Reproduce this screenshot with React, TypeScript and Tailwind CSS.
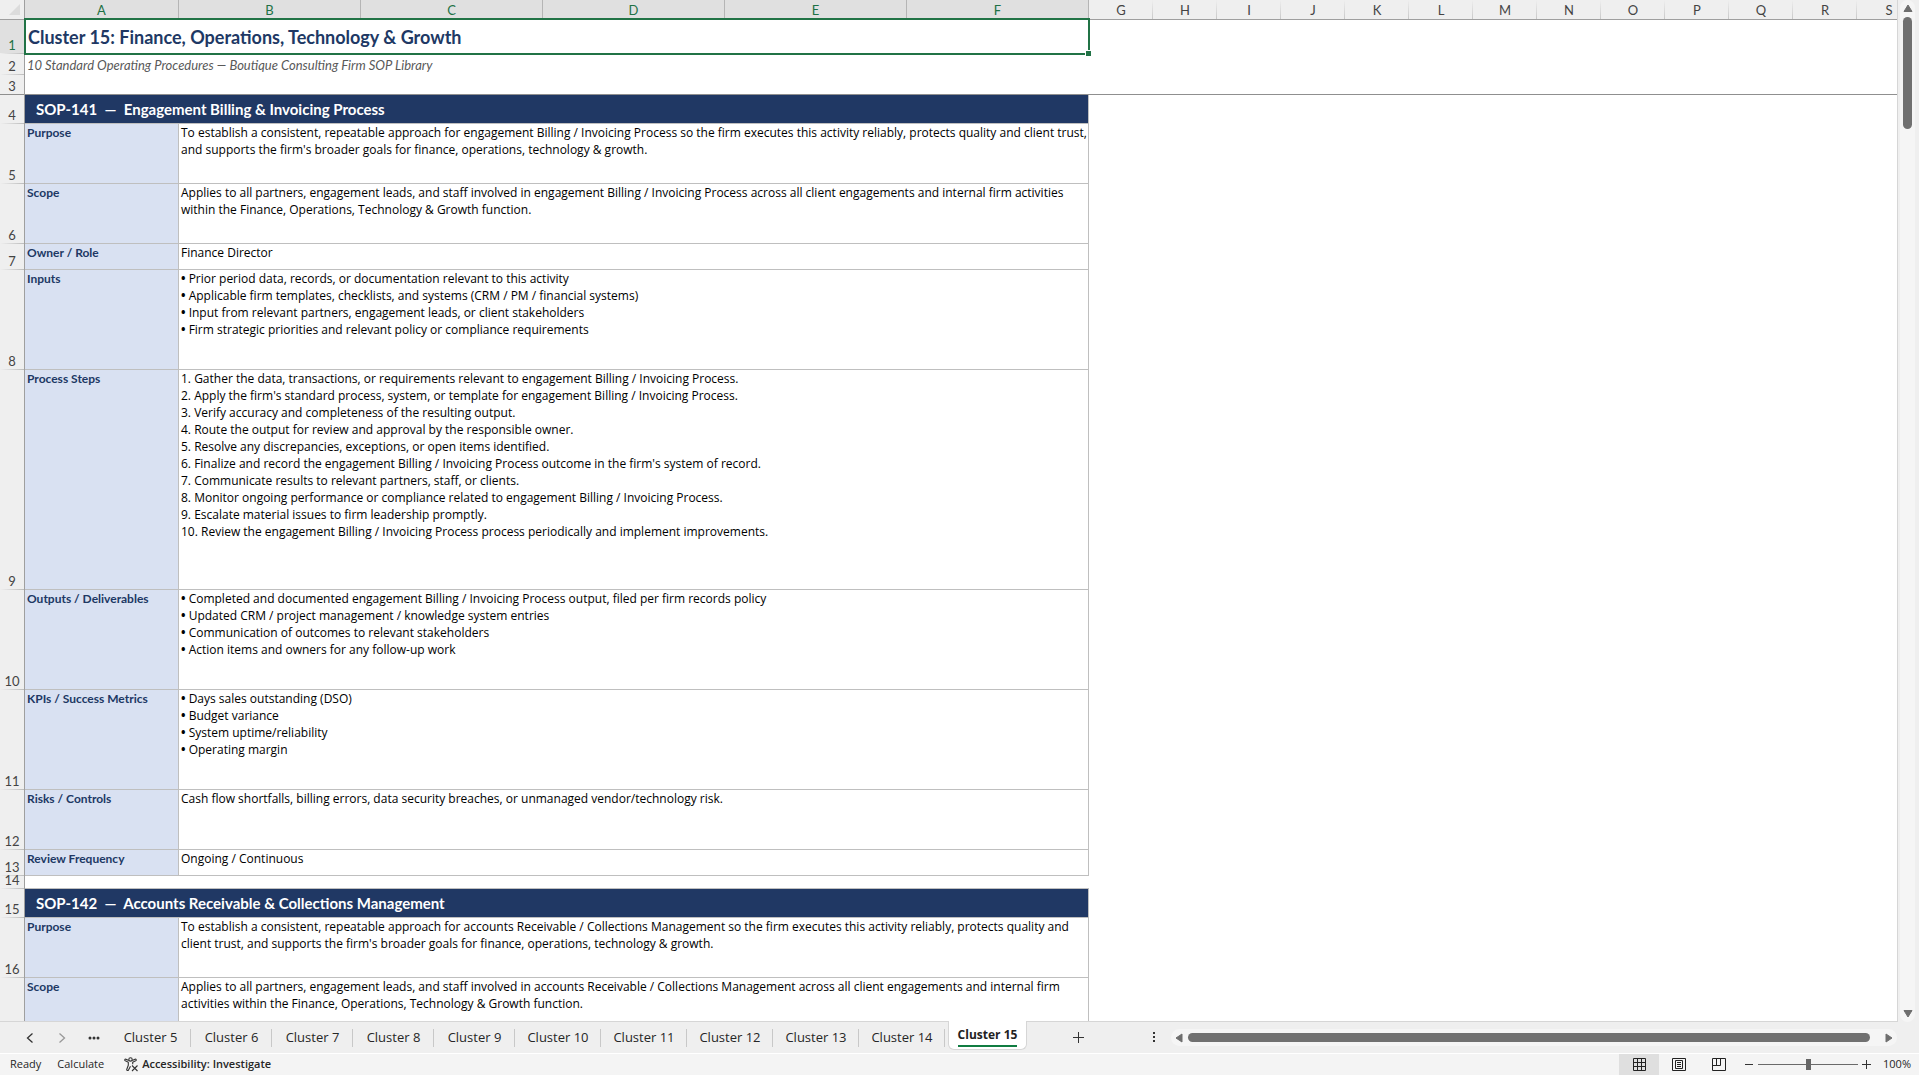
import clsx from "clsx";

const MERGED_COLS = ["A", "B", "C", "D", "E", "F"];
const FREE_COLS = ["G", "H", "I", "J", "K", "L", "M", "N", "O", "P", "Q", "R", "S"];

const TABS = [5, 6, 7, 8, 9, 10, 11, 12, 13, 14, 15];
const ACTIVE_TAB = 15;

type Field = { row: number; height: string; label: string; bullets?: boolean; lines: string[] };

const SOP_141: Field[] = [
  {
    row: 5,
    height: "h-[60px]",
    label: "Purpose",
    lines: [
      "To establish a consistent, repeatable approach for engagement Billing / Invoicing Process so the firm executes this activity reliably, protects quality and client trust,",
      "and supports the firm's broader goals for finance, operations, technology & growth.",
    ],
  },
  {
    row: 6,
    height: "h-[60px]",
    label: "Scope",
    lines: [
      "Applies to all partners, engagement leads, and staff involved in engagement Billing / Invoicing Process across all client engagements and internal firm activities",
      "within the Finance, Operations, Technology & Growth function.",
    ],
  },
  { row: 7, height: "h-[26px]", label: "Owner / Role", lines: ["Finance Director"] },
  {
    row: 8,
    height: "h-[100px]",
    label: "Inputs",
    bullets: true,
    lines: [
      "Prior period data, records, or documentation relevant to this activity",
      "Applicable firm templates, checklists, and systems (CRM / PM / financial systems)",
      "Input from relevant partners, engagement leads, or client stakeholders",
      "Firm strategic priorities and relevant policy or compliance requirements",
    ],
  },
  {
    row: 9,
    height: "h-[220px]",
    label: "Process Steps",
    lines: [
      "1. Gather the data, transactions, or requirements relevant to engagement Billing / Invoicing Process.",
      "2. Apply the firm's standard process, system, or template for engagement Billing / Invoicing Process.",
      "3. Verify accuracy and completeness of the resulting output.",
      "4. Route the output for review and approval by the responsible owner.",
      "5. Resolve any discrepancies, exceptions, or open items identified.",
      "6. Finalize and record the engagement Billing / Invoicing Process outcome in the firm's system of record.",
      "7. Communicate results to relevant partners, staff, or clients.",
      "8. Monitor ongoing performance or compliance related to engagement Billing / Invoicing Process.",
      "9. Escalate material issues to firm leadership promptly.",
      "10. Review the engagement Billing / Invoicing Process process periodically and implement improvements.",
    ],
  },
  {
    row: 10,
    height: "h-[100px]",
    label: "Outputs / Deliverables",
    bullets: true,
    lines: [
      "Completed and documented engagement Billing / Invoicing Process output, filed per firm records policy",
      "Updated CRM / project management / knowledge system entries",
      "Communication of outcomes to relevant stakeholders",
      "Action items and owners for any follow-up work",
    ],
  },
  {
    row: 11,
    height: "h-[100px]",
    label: "KPIs / Success Metrics",
    bullets: true,
    lines: [
      "Days sales outstanding (DSO)",
      "Budget variance",
      "System uptime/reliability",
      "Operating margin",
    ],
  },
  {
    row: 12,
    height: "h-[60px]",
    label: "Risks / Controls",
    lines: ["Cash flow shortfalls, billing errors, data security breaches, or unmanaged vendor/technology risk."],
  },
  { row: 13, height: "h-[26px]", label: "Review Frequency", lines: ["Ongoing / Continuous"] },
];

const SOP_142: Field[] = [
  {
    row: 16,
    height: "h-[60px]",
    label: "Purpose",
    lines: [
      "To establish a consistent, repeatable approach for accounts Receivable / Collections Management so the firm executes this activity reliably, protects quality and",
      "client trust, and supports the firm's broader goals for finance, operations, technology & growth.",
    ],
  },
  {
    row: 17,
    height: "h-[60px]",
    label: "Scope",
    lines: [
      "Applies to all partners, engagement leads, and staff involved in accounts Receivable / Collections Management across all client engagements and internal firm",
      "activities within the Finance, Operations, Technology & Growth function.",
    ],
  },
];

function RowNumber({ n, selected, frozenEdge }: { n: number; selected?: boolean; frozenEdge?: boolean }) {
  return (
    <th
      scope="row"
      className={clsx(
        "border-r border-[#9f9f9f] p-0 pb-1 align-bottom text-center text-[13px] leading-[9px] font-normal bg-no-repeat bg-bottom bg-[length:100%_1px]",
        selected ? "bg-[#e0e0e0] text-[#1e7145]" : "bg-[#efefef] text-[#444444]",
        frozenEdge
          ? "bg-[linear-gradient(#8f8f8f,#8f8f8f)]"
          : "bg-[linear-gradient(to_right,#efefef,#bdbdbd)]",
      )}
    >
      {n}
    </th>
  );
}

function BannerRow({ n, code, title }: { n: number; code: string; title: string }) {
  return (
    <tr className="h-[29px]">
      <RowNumber n={n} />
      <td
        colSpan={6}
        className="border-r border-b border-[#bfbfbf] bg-[#203864] p-0 pl-[11px] align-middle text-[15px] leading-5 font-bold whitespace-pre text-white"
      >
        {`${code}  —  ${title}`}
      </td>
      <td colSpan={13} />
    </tr>
  );
}

function FieldRow({ field }: { field: Field }) {
  return (
    <tr className={field.height}>
      <RowNumber n={field.row} />
      <td className="border-r border-b border-[#bfbfbf] bg-[#d9e1f2] p-0 pl-0.5 align-top text-[12px] leading-[17px] font-bold text-[#203864]">
        {field.label}
      </td>
      <td
        colSpan={5}
        className="border-r border-b border-[#bfbfbf] p-0 pl-0.5 align-top font-['Open_Sans',sans-serif] text-[12px] leading-[17px] whitespace-nowrap text-black"
      >
        {field.lines.map((line) => (
          <div key={line}>
            {field.bullets && <b>• </b>}
            {line}
          </div>
        ))}
      </td>
      <td colSpan={13} />
    </tr>
  );
}

function Sheet() {
  return (
    <div className="min-w-0 flex-1 overflow-hidden border-r border-b border-[#d6d6d6] bg-white">
      <table className="w-[1921px] table-fixed border-separate border-spacing-0 font-[Lato,sans-serif]">
        <colgroup>
          <col className="w-[25px]" />
          <col className="w-[154px]" />
          {MERGED_COLS.slice(1).map((c) => (
            <col key={c} className="w-[182px]" />
          ))}
          {FREE_COLS.map((c) => (
            <col key={c} className="w-[64px]" />
          ))}
        </colgroup>
        <thead>
          <tr className="h-5">
            <td className="border-r border-b border-[#9f9f9f] bg-[#efefef] p-0">
              <svg width="24" height="19" className="block">
                <path d="M20 4v11H9z" fill="#dcdcdc" />
              </svg>
            </td>
            {MERGED_COLS.map((c) => (
              <th
                key={c}
                scope="col"
                className="border-r border-b border-r-[#b5b5b5] border-b-[#9f9f9f] bg-[#e0e0e0] p-0 pt-px text-center text-[13px] leading-4 font-normal text-[#1e7145]"
              >
                {c}
              </th>
            ))}
            {FREE_COLS.map((c) => (
              <th
                key={c}
                scope="col"
                className="border-b border-[#9f9f9f] bg-[#efefef] bg-[linear-gradient(#efefef,#c8c8c8)] bg-[length:1px_100%] bg-right bg-no-repeat p-0 pt-px text-center text-[13px] leading-4 font-normal text-[#444444]"
              >
                {c}
              </th>
            ))}
          </tr>
        </thead>
        <tbody>
          <tr className="h-[34px]">
            <RowNumber n={1} selected />
            <td
              colSpan={6}
              className="relative p-0 pl-[3px] align-middle text-[18px] leading-6 font-bold text-[#203864]"
            >
              Cluster 15: Finance, Operations, Technology &amp; Growth
              {/* Selection frame and fill handle */}
              <div className="pointer-events-none absolute -top-0.5 -right-px -bottom-px -left-px border-2 border-[#217346]" />
              <div className="absolute -right-0.5 -bottom-0.5 size-1.5 border-t border-l border-white bg-[#217346]" />
            </td>
            <td colSpan={13} />
          </tr>
          <tr className="h-[21px]">
            <RowNumber n={2} />
            <td colSpan={6} className="p-0 pl-0.5 align-middle text-[13px] leading-4 text-[#595959] italic">
              10 Standard Operating Procedures — Boutique Consulting Firm SOP Library
            </td>
            <td colSpan={13} />
          </tr>
          <tr className="h-5">
            <RowNumber n={3} frozenEdge />
            <td colSpan={19} className="border-b border-[#8f8f8f]" />
          </tr>
          <BannerRow n={4} code="SOP-141" title="Engagement Billing & Invoicing Process" />
          {SOP_141.map((f) => (
            <FieldRow key={f.row} field={f} />
          ))}
          <tr className="h-[13px]">
            <RowNumber n={14} />
            <td colSpan={6} className="border-b border-[#bfbfbf] p-0" />
            <td colSpan={13} className="p-0" />
          </tr>
          <BannerRow n={15} code="SOP-142" title="Accounts Receivable & Collections Management" />
          {SOP_142.map((f) => (
            <FieldRow key={f.row} field={f} />
          ))}
        </tbody>
      </table>
    </div>
  );
}

function VerticalScrollbar() {
  return (
    <div className="w-[21px] shrink-0 pr-1 pl-0.5">
      <div className="flex h-full flex-col items-center rounded-lg bg-[#f5f5f5] pt-1 pb-1">
        <button aria-label="Scroll up" className="block">
          <svg width="10" height="8" viewBox="0 0 10 8" className="block">
            <path d="M5 1 9 7.5H1z" fill="#6e6e6e" stroke="#6e6e6e" strokeLinejoin="round" />
          </svg>
        </button>
        <div className="mt-[5px] h-[112px] w-[9px] rounded-full bg-[#707070]" />
        <button aria-label="Scroll down" className="mt-auto block">
          <svg width="10" height="8" viewBox="0 0 10 8" className="block">
            <path d="M5 7 9 .5H1z" fill="#6e6e6e" stroke="#6e6e6e" strokeLinejoin="round" />
          </svg>
        </button>
      </div>
    </div>
  );
}

function SheetTab({ n }: { n: number }) {
  if (n === ACTIVE_TAB) {
    return (
      <div className="flex w-[86px] items-start border-r border-transparent px-[3px]">
        <button className="-mt-px flex h-[29px] flex-1 justify-center rounded-b-md border border-t-0 border-[#d6d6d6] bg-white pt-1 text-[12px] leading-5 font-bold text-[#222222]">
          <span className="h-[22px] border-b-2 border-[#107c41]">Cluster {n}</span>
        </button>
      </div>
    );
  }
  return (
    <button className={clsx("py-1.5 text-[13px] text-[#262626]", n < 10 ? "w-[81px]" : "w-[86px]")}>
      <span className="flex h-[18px] items-center justify-center border-r border-[#c8c8c8] pl-px">Cluster {n}</span>
    </button>
  );
}

function TabBar() {
  return (
    <div className="flex h-[31px] shrink-0 pl-3.5 whitespace-nowrap">
      <button aria-label="Previous sheet" className="flex w-8 items-center justify-center">
        <svg width="8" height="12" viewBox="0 0 8 12" fill="none" stroke="#333" strokeWidth="1.3">
          <path d="M6.5 1.5 1.5 6l5 4.5" />
        </svg>
      </button>
      <button aria-label="Next sheet" className="flex w-8 items-center justify-center">
        <svg width="8" height="12" viewBox="0 0 8 12" fill="none" stroke="#999" strokeWidth="1.3">
          <path d="M1.5 1.5l5 4.5-5 4.5" />
        </svg>
      </button>
      <button aria-label="All sheets" className="flex w-8 items-center justify-center">
        <svg width="12" height="4" viewBox="0 0 12 4" fill="#333">
          <circle cx="2" cy="2" r="1.5" />
          <circle cx="6" cy="2" r="1.5" />
          <circle cx="10" cy="2" r="1.5" />
        </svg>
      </button>
      {TABS.map((n) => (
        <SheetTab key={n} n={n} />
      ))}
      <button aria-label="New sheet" className="ml-[31px] flex w-8 items-center justify-center">
        <svg width="11" height="11" viewBox="0 0 11 11" stroke="#333" strokeWidth="1">
          <path d="M5.5 0v11M0 5.5h11" />
        </svg>
      </button>
      <div className="ml-[59px] flex w-[3px] items-center">
        <svg width="3" height="11" fill="#333">
          <path d="M0 0h2v2H0zM0 4h2v2H0zM0 8h2v2H0z" />
        </svg>
      </div>
      <div className="my-auto mr-[22px] ml-[15px] flex h-[17px] flex-1 items-center rounded-full bg-[#f5f5f5] px-1">
        <button aria-label="Scroll left">
          <svg width="8" height="10" viewBox="0 0 8 10" className="block">
            <path d="M1 5 7 1v8z" fill="#6e6e6e" stroke="#6e6e6e" strokeLinejoin="round" />
          </svg>
        </button>
        <div className="mr-[15px] ml-[5px] h-[9px] flex-1 rounded-full bg-[#707070]" />
        <button aria-label="Scroll right">
          <svg width="8" height="10" viewBox="0 0 8 10" className="block">
            <path d="M7 5 1 1v8z" fill="#6e6e6e" stroke="#6e6e6e" strokeLinejoin="round" />
          </svg>
        </button>
      </div>
    </div>
  );
}

function StatusBar() {
  return (
    <div className="flex h-[22px] shrink-0 items-stretch border-t border-white bg-[#f4f4f4] pl-2.5 text-[11px] text-[#262626]">
      <div className="flex items-center gap-4">
        <span>Ready</span>
        <span>Calculate</span>
      </div>
      <button className="ml-5 flex items-center gap-[3px] font-semibold">
        <svg width="15" height="15" viewBox="0 0 15 15" fill="none" stroke="#333" strokeWidth="1.1" strokeLinejoin="round">
          <circle cx="6.5" cy="2.4" r="1.7" />
          <path d="M4.8 3.4 2 2.2C.9 1.8.2 3.2 1.3 3.8L4.3 5.2v3L2.8 12.2c-.4 1.2 1.2 1.8 1.7.7L6.5 9.2M8.2 3.4 11 2.2c1.1-.4 1.8 1 .7 1.6L8.7 5.2v2" />
          <path d="M8 8.5l5.5 5.5M13.5 8.5 8 14" />
        </svg>
        Accessibility: Investigate
      </button>
      <div className="ml-auto flex items-stretch">
        <button aria-label="Normal view" className="flex w-10 items-center justify-center bg-[#dfdfdf]">
          <svg width="13" height="13" viewBox="0 0 13 13" fill="none" stroke="#222">
            <path d="M.5.5h12v12H.5zM4.5.5v12M8.5.5v12M.5 4.5h12M.5 8.5h12" />
          </svg>
        </button>
        <button aria-label="Page layout view" className="flex w-10 items-center justify-center">
          <svg width="14" height="13" viewBox="0 0 14 13" fill="none" stroke="#222">
            <path d="M.5.5h13v12H.5zM3.5 2.5h7v8h-7zM5 4.5h4M5 6.5h4M5 8.5h4" />
          </svg>
        </button>
        <button aria-label="Page break preview" className="flex w-10 items-center justify-center">
          <svg width="14" height="13" viewBox="0 0 14 13" fill="none" stroke="#222">
            <path d="M.5.5h13v12H.5zM.5 7.5h8v-7M4.5.5v7" />
          </svg>
        </button>
        <button aria-label="Zoom out" className="flex w-[19px] items-center justify-center">
          <svg width="8" height="9" stroke="#333">
            <path d="M0 4.5h8" />
          </svg>
        </button>
        <input
          type="range"
          aria-label="Zoom"
          min={0}
          max={100}
          defaultValue={50}
          className="my-auto h-3 w-[100px] appearance-none bg-[linear-gradient(#6a6a6a,#6a6a6a)] bg-[length:100%_1px] bg-center bg-no-repeat [&::-webkit-slider-thumb]:h-[11px] [&::-webkit-slider-thumb]:w-[5px] [&::-webkit-slider-thumb]:appearance-none [&::-webkit-slider-thumb]:bg-[#666666]"
        />
        <button aria-label="Zoom in" className="flex w-[17px] items-center justify-center">
          <svg width="9" height="9" stroke="#333">
            <path d="M0 4.5h9M4.5 0v9" />
          </svg>
        </button>
        <button className="w-11 text-center">100%</button>
      </div>
    </div>
  );
}

export default function App() {
  return (
    <div className="flex h-screen flex-col overflow-hidden bg-[#efefef] font-['Open_Sans',sans-serif]">
      <div className="flex min-h-0 flex-1">
        <Sheet />
        <VerticalScrollbar />
      </div>
      <TabBar />
      <StatusBar />
    </div>
  );
}
